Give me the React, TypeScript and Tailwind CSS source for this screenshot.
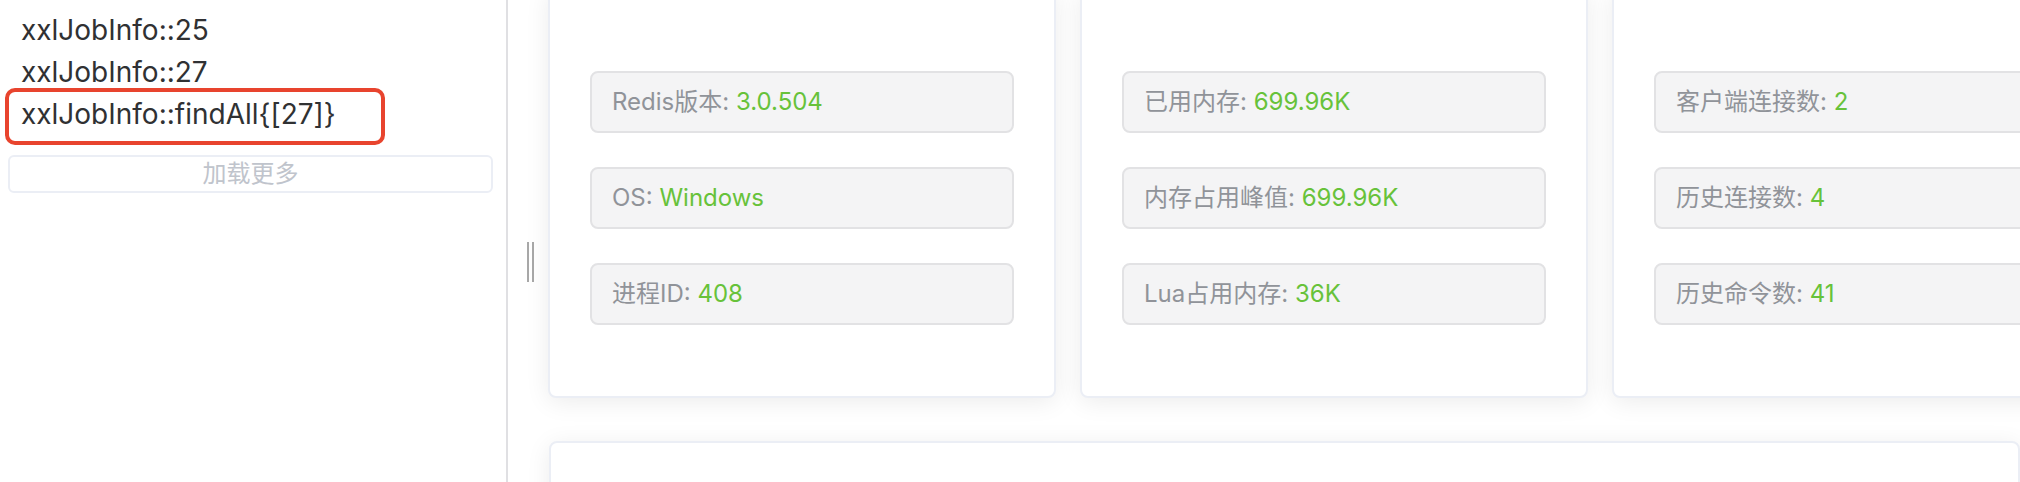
import React from "react"

const font = { fontFamily: 'Inter, "Noto Sans CJK SC", sans-serif' }

const jobs = ["xxlJobInfo::25", "xxlJobInfo::27", "xxlJobInfo::findAll{[27]}"]

const columns: [string, string][][] = [
  [
    ["Redis版本", "3.0.504"],
    ["OS", "Windows"],
    ["进程ID", "408"],
  ],
  [
    ["已用内存", "699.96K"],
    ["内存占用峰值", "699.96K"],
    ["Lua占用内存", "36K"],
  ],
  [
    ["客户端连接数", "2"],
    ["历史连接数", "4"],
    ["历史命令数", "41"],
  ],
]

function InfoTag({ label, value }: { label: string; value: string }) {
  return (
    <div className="flex h-[62px] items-center rounded-[8px] border-2 border-[#e2e2e4] bg-[#f4f4f5] px-[20px] text-[24px] text-[#909399]">
      <span>{label}:&nbsp;</span>
      <span className="text-[#67c23a]">{value}</span>
    </div>
  )
}

export default function App() {
  return (
    <div className="flex h-[482px] w-[2020px] overflow-hidden bg-white" style={font}>
      {/* Key list */}
      <div className="relative w-[508px] shrink-0 border-r-2 border-[#e0e0e3] pt-[9px]">
        {jobs.map((j) => (
          <div key={j} className="h-[42px] pl-[21px] text-[28px] leading-[42px] text-[#303133]">
            {j}
          </div>
        ))}
        <div className="absolute left-[5px] top-[88px] h-[57px] w-[380px] rounded-[10px] border-4 border-[#e8442e]" />
        <button className="ml-[8px] mt-[20px] flex h-[38px] w-[485px] items-center justify-center rounded-[6px] border-2 border-[#ebeef5] text-[24px] text-[#c0c4cc]">
          加载更多
        </button>
      </div>

      {/* Split handle */}
      <div className="w-[40px] shrink-0 pt-[242px]">
        <div className="ml-[19px] flex h-[40px] gap-[3px]">
          <div className="w-[2px] bg-[#a8a8a8]" />
          <div className="w-[2px] bg-[#a8a8a8]" />
        </div>
      </div>

      {/* Info panels */}
      <div className="flex min-w-0 flex-1 flex-col">
        <div className="-mt-[12px] flex w-max gap-[24px]">
          {columns.map((col, i) => (
            <div
              key={i}
              className="flex w-[508px] shrink-0 flex-col gap-[34px] rounded-[8px] border-2 border-[#ebeef5] bg-white px-[40px] pb-[71px] pt-[81px] shadow-[0_4px_24px_0_rgba(0,0,0,0.08)]"
            >
              {col.map(([l, v]) => (
                <InfoTag key={l} label={l} value={v} />
              ))}
            </div>
          ))}
        </div>
        <div className="ml-[1px] mt-[43px] h-[200px] rounded-[8px] border-2 border-[#ebeef5] bg-white px-[86px] pt-[34px] shadow-[0_4px_24px_0_rgba(0,0,0,0.08)]">
          <span className="text-[24px] text-[#909399]">Redis 命令统计信息</span>
        </div>
      </div>
    </div>
  )
}
